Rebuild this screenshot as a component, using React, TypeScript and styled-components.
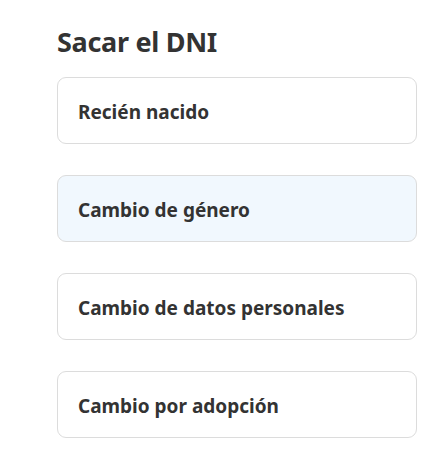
import React from "react";
import styled, { createGlobalStyle } from "styled-components";

const Global = createGlobalStyle`
  html, body { margin: 0; padding: 0; background: #ffffff; }
  body { font-family: "Noto Sans", "Open Sans", sans-serif; color: #333333; }
`;

const Page = styled.main`
  display: flex;
  flex-direction: column;
  padding: 25px 0 0 57px;
  width: 360px;
`;

const Title = styled.h2`
  margin: 0 0 18px 0;
  font-size: 27px;
  line-height: 34px;
  font-weight: 700;
  letter-spacing: -0.3px;
  color: #333333;
`;

const List = styled.div`
  display: flex;
  flex-direction: column;
  gap: 31px;
`;

const Card = styled.a<{ $active?: boolean }>`
  display: flex;
  align-items: center;
  box-sizing: border-box;
  height: 67px;
  padding: 3px 20px 0 20px;
  border: 1px solid #dcdcdc;
  border-radius: 9px;
  background: ${(p) => (p.$active ? "#f1f8fe" : "#ffffff")};
  color: #333333;
  text-decoration: none;
  font-size: 19px;
  font-weight: 700;
`;

const items = [
  { label: "Recién nacido" },
  { label: "Cambio de género", active: true },
  { label: "Cambio de datos personales" },
  { label: "Cambio por adopción" },
];

export default function App() {
  return (
    <>
      <Global />
      <Page>
        <Title>Sacar el DNI</Title>
        <List>
          {items.map((it) => (
            <Card key={it.label} href="#" $active={it.active}>
              {it.label}
            </Card>
          ))}
        </List>
      </Page>
    </>
  );
}
